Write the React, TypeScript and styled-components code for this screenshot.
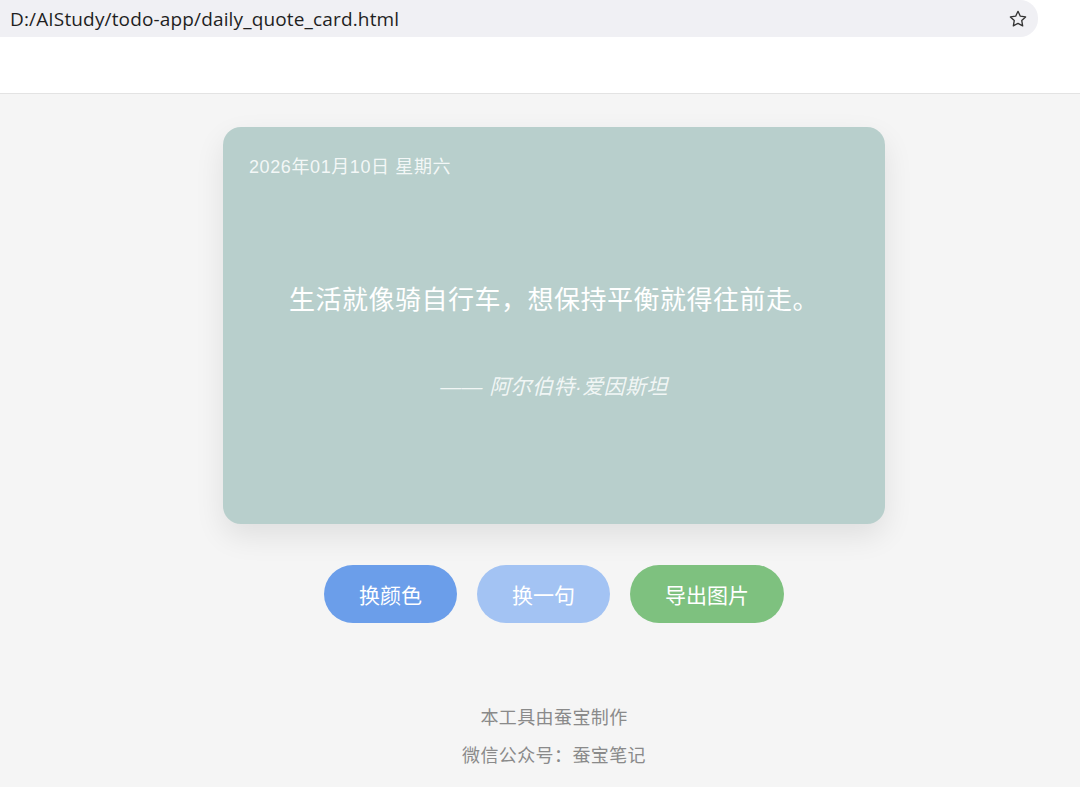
import styled, { createGlobalStyle } from 'styled-components';

const GlobalStyle = createGlobalStyle`
  html, body {
    margin: 0;
    padding: 0;
    background: #f5f5f5;
  }
  body {
    font-family: "Liberation Sans", "Noto Sans CJK SC", sans-serif;
  }
`;

const Page = styled.div`
  width: 1080px;
  min-height: 787px;
  background: #f5f5f5;
  overflow: hidden;
`;

const BrowserTop = styled.div`
  height: 93px;
  background: #fff;
  border-bottom: 1px solid #e3e3e3;
`;

const AddressBar = styled.div`
  display: flex;
  align-items: center;
  justify-content: space-between;
  width: 1038px;
  height: 37px;
  padding: 0 10px;
  box-sizing: border-box;
  background: #f0f0f4;
  border-top-right-radius: 18px;
  border-bottom-right-radius: 18px;
  color: #1f1f1f;
  font-family: "Open Sans", "Liberation Sans", sans-serif;
  font-size: 19px;
  letter-spacing: 0.15px;
`;

const Main = styled.main`
  display: flex;
  flex-direction: column;
  align-items: center;
  padding: 33px 0 0 28px;
`;

const Card = styled.section`
  display: flex;
  flex-direction: column;
  width: 662px;
  height: 397px;
  padding: 26px 26px 28px;
  box-sizing: border-box;
  background: #b8cfcc;
  border-radius: 18px;
  box-shadow: 0 12px 30px rgba(0, 0, 0, 0.09);
`;

const DateLine = styled.div`
  color: rgba(255, 255, 255, 0.85);
  font-size: 18px;
  letter-spacing: 0.6px;
  line-height: 28px;
`;

const QuoteBody = styled.div`
  flex: 1;
  display: flex;
  flex-direction: column;
  align-items: center;
  justify-content: center;
  gap: 53px;
  padding-top: 6px;
`;

const QuoteText = styled.p`
  margin: 0;
  color: #fff;
  font-size: 26px;
  letter-spacing: 0.5px;
  line-height: 38px;
  text-align: center;
`;

const Author = styled.p`
  margin: 0;
  color: rgba(255, 255, 255, 0.82);
  font-size: 21px;
  font-style: italic;
  letter-spacing: 0.4px;
  line-height: 30px;
`;

const Actions = styled.div`
  display: flex;
  gap: 20px;
  margin-top: 41px;
`;

const ActionButton = styled.button<{ $bg: string }>`
  height: 58px;
  padding: 0 35px;
  border: none;
  border-radius: 29px;
  background: ${(p) => p.$bg};
  color: #fff;
  font-family: "Liberation Sans", "Noto Sans CJK SC", sans-serif;
  font-size: 21px;
  cursor: pointer;
`;

const Footer = styled.footer`
  display: flex;
  flex-direction: column;
  align-items: center;
  gap: 10px;
  margin-top: 81px;
  color: #8a8a8a;
  font-size: 18px;
  letter-spacing: 0.4px;
  line-height: 28px;
`;

const StarIcon = () => (
  <svg width="20" height="20" viewBox="0 0 24 24" fill="none" stroke="#333" strokeWidth="1.6" strokeLinejoin="round">
    <path d="M12 2.8l2.8 5.8 6.3.9-4.6 4.4 1.1 6.3L12 17.2l-5.6 3 1.1-6.3-4.6-4.4 6.3-.9z" />
  </svg>
);

export default function App() {
  return (
    <Page>
      <GlobalStyle />
      <BrowserTop>
        <AddressBar>
          <span>D:/AIStudy/todo-app/daily_quote_card.html</span>
          <StarIcon />
        </AddressBar>
      </BrowserTop>
      <Main>
        <Card>
          <DateLine>2026年01月10日 星期六</DateLine>
          <QuoteBody>
            <QuoteText>生活就像骑自行车，想保持平衡就得往前走。</QuoteText>
            <Author>—— 阿尔伯特·爱因斯坦</Author>
          </QuoteBody>
        </Card>
        <Actions>
          <ActionButton $bg="#6b9eea">换颜色</ActionButton>
          <ActionButton $bg="#a3c3f3">换一句</ActionButton>
          <ActionButton $bg="#7ec17f">导出图片</ActionButton>
        </Actions>
        <Footer>
          <span>本工具由蚕宝制作</span>
          <span>微信公众号：蚕宝笔记</span>
        </Footer>
      </Main>
    </Page>
  );
}
